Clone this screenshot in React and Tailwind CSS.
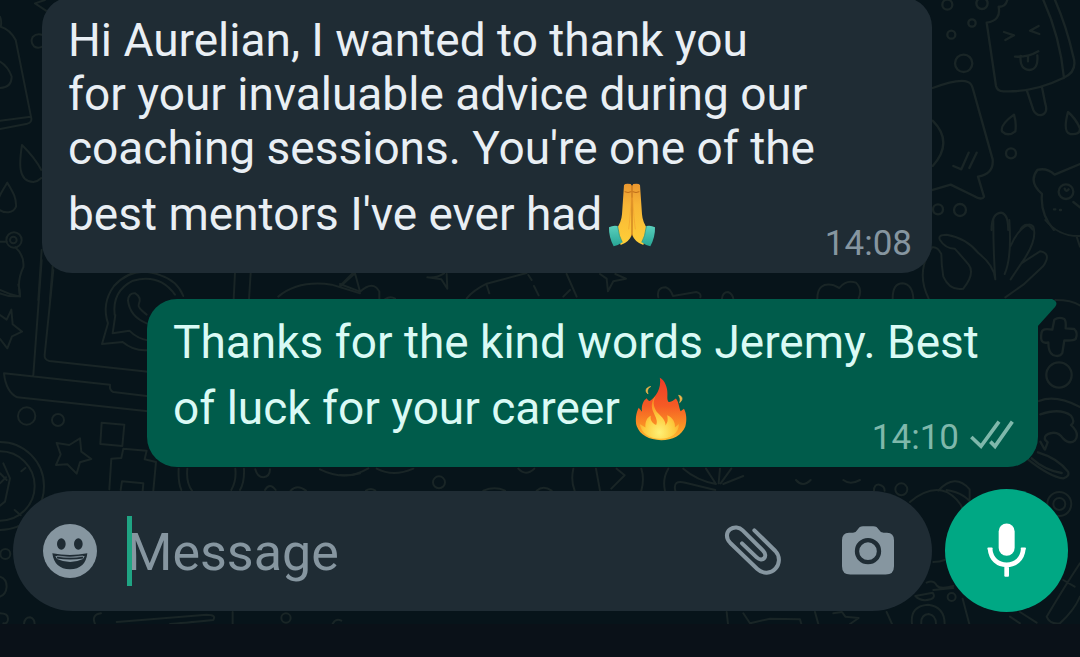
import React from "react";

function Wallpaper() {
  return (
    <svg
      aria-hidden="true"
      className="absolute inset-0 h-full w-full"
      viewBox="0 0 1080 624"
      preserveAspectRatio="xMidYMax slice"
      fill="none"
      stroke="#192526"
      strokeLinecap="round"
      strokeLinejoin="round"
    >
      {/* left edge: mug, drops, lamp */}
      <g transform="scale(.3333)" strokeWidth="6">
        <path d="M135 0 105 10 138 32M128 105q-18-6-30 6-8 16 4 28 12 8 26 0M0 50q6 15 2 30 28 8 45 40l47 235q2 12-12 16L0 387M92 350 0 362M0 185q25 15 35 45 0 32-35 34" />
        <path d="M66 435c-8 50-14 110 34 111q14-2 24-12M66 435q40 40 58 75M22 548c-20 32-36 55-26 80 18 14 44 12 52-8 2-30-14-50-26-72ZM0 725h20M46 742q28 25 24 60-20 40-10 88Q30 885 0 870M125 750 115 900M160 775l-10 125M705 820l-4 80M752 820l-5 80M835 890q60-50 160-36l85 26M1020 858l50-50" />
        <circle cx="42" cy="720" r="23" />
        <circle cx="40" cy="720" r="10" />
      </g>
      {/* laptop, stars, pixel blocks */}
      <g transform="translate(0 260) scale(.3333)" strokeWidth="6">
        <path d="M125 0 100 345M160 30 134 285q-2 14 14 18l296 32M12 340l318 34q-2 18 10 22l100 12M12 340q6 56 40 72l392 42" />
        <path d="M324 190q-20-60 18-112 60-65 140-32 50 16 68 62M324 190l-18 62 62-6q36 30 80 24M346 165l-8 55 50-8q26 26 60 30M344 165q-8-72 55-103 80-22 126 42M440 190q-50-20-56-68 2-24 22-22 20 12 10 34-4 8 24 30" />
        <path d="M0 100q30 12 60 8 0-20-5-35M0 165l20 14 14-30 4 44 28 22-30 14-14 36-22-28M240 535l4 40 30 22-34 10-10 34-28-28-34 2 14-32-12-34 38 6ZM305 488l68 6-6 64-66-6ZM370 566l70 6-6 26 34 8-8 86M370 566l-6 28-30 2-6 92M362 690l4-26 64 6-2 24" />
        <circle cx="80" cy="468" r="26" />
        <circle cx="174" cy="480" r="18" />
        <circle cx="0" cy="678" r="132" />
        <circle cx="0" cy="678" r="104" />
        <path d="m10 610 20 45-15 70-15 12M0 640l20 20M0 670l18-18M64 634l12-10M44 750l18 16" />
        <path d="M536 626q-2 40 8 64M562 626q-4 42 14 66M706 626q4 36-12 64M732 626q2 40-12 64M766 628q6 24 24 24 20-2 20-24M960 628q60 30 120 12" />
      </g>
      {/* strip below composer on the left */}
      <g transform="translate(0 480) scale(.3333)" strokeWidth="6">
        <circle cx="16" cy="222" r="15" />
        <path d="M0 290q20 6 20 30-2 24-20 30M0 400q24 0 24 16t-14 14M72 432q2-20 18-20 14 4 14 20M285 432q-12-28 18-32M350 426l270-22q30 0 20 16-100 10-130 12M698 396v36M998 432q8-18 26-10M795 30q14-24 32 0M872 32q20-20 46 0" />
        <circle cx="858" cy="414" r="14" />
      </g>
      {/* between the bubbles */}
      <g transform="translate(340 260) scale(.3333)" strokeWidth="6">
        <path d="M0 80 45 40 60 95 0 72M60 95q40-36 58 0v24M135 118q16-12 30-2M262 52q30 2 50-12M262 52l42 6 18 28-2-44M380 115q20-24 60-44l120-32M440 75l8 25M565 45l10 15M582 78l14 28M680 42l30 68M670 110l20-20M780 42l20 14 4 38 16-30 38-8-32-14M955 112q-6-30 22-30 14 4 22 26l70-12q16 4 12 16M1146 116q2-20 18-20 14 6 16 20" />
      </g>
      {/* above the composer */}
      <g transform="translate(340 460) scale(.3333)" strokeWidth="6">
        <path d="M0 45q40 6 85-20M110 26q50 26 110 0M535 26q22 24 48 0M78 92q14-10 28 0M430 92q35-14 65 0M590 92q20-18 45 0M700 26q-8 36 4 66M768 26l12 66M830 26l24 20-40 40M904 26q10 30 0 66M985 26q-18 30-10 66M1030 26q40 35 98 46M1128 72l-30-46M1136 70l4-44M1142 70l32-44M1006 92q-8-34 30-24l90 22M1150 72l60-24" />
        <circle cx="297" cy="67" r="18" />
      </g>
      {/* right edge: ice lolly, chat card, bear */}
      <g transform="translate(900 0) scale(.3333)" strokeWidth="7">
        <circle cx="142" cy="14" r="15" />
        <circle cx="246" cy="10" r="17" />
        <circle cx="216" cy="69" r="11" />
        <circle cx="154" cy="104" r="12" />
        <circle cx="191" cy="190" r="26" />
        <circle cx="333" cy="460" r="15" />
        <circle cx="114" cy="628" r="15" />
        <circle cx="180" cy="630" r="18" />
        <path d="M322 0q-6 22-26 20 8 42-36 48l28 190q4 16 22 16 90 4 180-40 44-20 30-64Q500 80 465 0M430 0q50 110 62 234M380 270l20 60q10 20 28 14 16-8 8-32l-10-50M312 96l30 10-26 14M416 78l-26 14 28 10M345 170q40 2 70-16M362 168q-4 40 26 42 28-2 24-44M384 168v16" />
        <path d="M342 344q-42 30-36 50 18 18 40 0 4-24-4-50ZM504 336q-16 60 6 66 30 4 30-16-12-30-36-50ZM98 264q80-30 106-18 10 4 14 18l60 214q4 44-44 52l18 60q-6 12-30-2l-70-34-54 16M98 362q64 64 0 136M160 498l24 10 22-50M208 504l22-46M275 690q0-50 28-52 22 4 22 52M362 688q18-26 36 0M540 492l-76 32q-24-22-52-14-28 36 14 72-6 60 36 108M540 622l-20-16M462 628h4M480 630h3" />
        <circle cx="498" cy="575" r="22" />
        <path d="M494 566q4 12 12 2" />
      </g>
      {/* right edge: heart and plant */}
      <g transform="translate(800 220) scale(.3333)" strokeWidth="6">
        <path d="M52 236q0-52 50-40l16 8q20-26 50-16 20 20 8 46M278 236q0-46 30-46 30 4 32 46M386 236q-40-80 10-154 16-4 28 20 0 30 6 68 20 44 60 36 36-46 16-72-16-20-42-48-28 0-44-26-8-16 20-16 60 10 96 56 46 36 50 78M586 178q-6-80-6-178M614 162q22-50 14-162M632 178l32-48q50-70 36-110-12-16-36 8-20 20-32 50M664 130l56-36q36 6 10 44l-60 56-54 38M736 0q40 50 104 48M830 50l10 30M766 240q50 0 74 16" />
      </g>
      {/* right edge: cross, ring, mushroom */}
      <g transform="translate(935 295) scale(.3333)" strokeWidth="7">
        <path d="M358 74q14-10 30-2 6 6 4 28l26 2q12 12 4 30-8 6-34 4l-6 38q-8 14-28 6-14-6-14-38-28 8-20-30 2-14 32-8Z" />
        <circle cx="372" cy="240" r="38" />
        <path d="M312 318q50-20 123 18M316 358q60-20 92 4 14 20 0 28 28 26 12 46-16 14-36-6-14-20-34-16-24 4-20 20l8 8-8 22M316 440l12 22M275 490q70 56 110 60 20-6 14-20-30-40-90-58M290 490q40 36 90 44" />
      </g>
      {/* around the microphone button */}
      <g transform="translate(700 480) scale(.3333)" strokeWidth="6">
        <path d="M288 0q20 24 44 0M430 0q20 16 50 0M522 32q0-20 16-18 16 4 16 18M630 66q60-50 110-30 36 20 50 54M715 32q50-54 94-4v30M740 30q60 10 80 50M700 246q20 0 34-6M680 308q20-10 30 8 10 14 50 2M646 348l52-10q10 14-6 20-30 8-46-10ZM700 330l60-6M788 356l20 76M560 396l16 36M636 432q-6-54 48-58 50 6 50 58M664 432q-2-28 22-30 22 4 22 30M345 396l10 36M130 400l20 30 60-14 90 2 4 14M400 400l26-4 10 14 40 4-26 18M80 396l4 36M1140 250q-40 60-100 160 10 24 40 20 44-40 60-80M930 410l30 20M960 396l50 32M1090 300l34 20" />
        <circle cx="604" cy="28" r="18" />
        <circle cx="755" cy="351" r="12" />
        <circle cx="1078" cy="72" r="36" />
        <circle cx="1078" cy="72" r="18" />
      </g>
    </svg>
  );
}

function PrayingHands() {
  return (
    <svg role="img" aria-label="folded hands" viewBox="144 36 144 192" className="mb-4 ml-1.5 h-16 w-12 shrink-0">
      <defs>
        <linearGradient id="skin" x1="0" y1="0" x2="0" y2="1">
          <stop offset="0" stopColor="#e9962f" />
          <stop offset=".35" stopColor="#f8b636" />
          <stop offset="1" stopColor="#ffcf38" />
        </linearGradient>
        <linearGradient id="cuff" x1="0" y1="0" x2="0" y2="1">
          <stop offset="0" stopColor="#5bd0bd" />
          <stop offset="1" stopColor="#27a595" />
        </linearGradient>
      </defs>
      <path d="M192 42q4-6 20-3l4 6v145q-8 24-34 32l-13-48q15-19 17-44Z" fill="url(#skin)" />
      <path d="M240 42q-4-6-20-3l-4 6v145q8 24 34 32l13-48q-15-19-17-44Z" fill="url(#skin)" />
      <path d="M216 44v152M194 62q10 5 20 0M218 62q10 5 20 0" stroke="#bd6b18" strokeWidth="3" fill="none" />
      <path d="M214 80q-4 65-8 95M218 80q4 65 8 95" stroke="#f1a02e" strokeWidth="2" fill="none" />
      <path d="M147 169q12-7 26-4 4 33 14 49-10 8-26 12-15-28-14-57Z" fill="url(#cuff)" />
      <path d="M285 169q-12-7-26-4-4 33-14 49 10 8 26 12 15-28 14-57Z" fill="url(#cuff)" />
      <path d="M173 166q4 32 14 48M259 166q-4 32-14 48" stroke="#1e8e80" strokeWidth="2" fill="none" />
    </svg>
  );
}

function Fire() {
  return (
    <svg role="img" aria-label="fire" viewBox="104 52 158 190" className="mb-4 ml-3.5 h-16 w-[53px] shrink-0">
      <defs>
        <linearGradient id="flame" x1="0" y1="0" x2="0" y2="1">
          <stop offset="0" stopColor="#ed3b27" />
          <stop offset=".45" stopColor="#f55b25" />
          <stop offset=".8" stopColor="#fb9724" />
          <stop offset="1" stopColor="#ffbd33" />
        </linearGradient>
        <radialGradient id="core" cx=".5" cy=".85" r=".7">
          <stop offset="0" stopColor="#fff176" />
          <stop offset=".55" stopColor="#fdca3d" />
          <stop offset="1" stopColor="#fb8c24" />
        </radialGradient>
      </defs>
      <path d="M181 54c10 4 20 20 22 38 2 16-2 26 4 34 8 2 16-6 22-10 8 8 8 24 14 38l10-8c8 14 9 36 4 53-10 26-38 41-72 41-36 0-64-16-73-42-5-18-2-40 6-55l10 12c-3-18 4-34 14-40 2 4 5 8 9 8 16-10 36-36 30-69Z" fill="url(#flame)" />
      <path d="M168 108c-10 22-4 38 8 52 12 12 22 22 22 36 8-10 7-19 5-30 18 8 24 22 23 36l12-10c0 28-24 44-55 44-34 0-57-17-62-44l17 10c-1-18 5-30 16-35-2 13 3 20 16 28 6-12-2-24-8-38-8-18-6-34 6-49Z" fill="url(#core)" />
      <path d="M154 80c-8 4-12 12-8 22-10-6-8-20 8-22ZM237 106c12 2 14 14 3 22 3-8 2-14-3-22Z" fill="#efb64b" stroke="#efb64b" strokeWidth="2" />
    </svg>
  );
}

function Ticks() {
  return (
    <svg role="img" aria-label="Delivered" viewBox="510 600 138 90" className="mb-[7px] ml-2.5 h-[30px] w-[46px]" fill="none" stroke="#7fb8ab" strokeWidth="11">
      <path d="m517 651 29 28 54-74M574 665l14 14 52-74" />
    </svg>
  );
}

function SmileIcon() {
  return (
    <svg aria-hidden="true" viewBox="129 130 162 162" className="size-[54px]">
      <circle cx="210" cy="211" r="81" fill="#8696a0" />
      <ellipse cx="184" cy="190" rx="13" ry="17" fill="#1f2c34" />
      <ellipse cx="235" cy="190" rx="13" ry="17" fill="#1f2c34" />
      <path d="M157 218q53 10 105 0-5 47-52 48-47-1-53-48Z" fill="#1f2c34" />
      <path d="M166 226q44 7 88 0l-5 9q-38 18-78 0Z" fill="#8696a0" />
      <path d="M171 226q39 7 78 0" stroke="#8696a0" strokeWidth="2" fill="none" />
      <path d="M171 231q39 6 78 0" stroke="#1f2c34" strokeWidth="5" fill="none" />
    </svg>
  );
}

function ClipIcon() {
  return (
    <svg aria-hidden="true" viewBox="72 132 171 159" className="h-[53px] w-[57px]" fill="none" stroke="#8696a0" strokeWidth="12" strokeLinecap="round">
      <path d="M163 151L226 213C243 231 237 254 227 265C213 281 189 283 172 267L91 189C77 174 78 157 90 148C102 139 118 141 128 151L189 212C206 230 187 248 170 232L126 190" />
    </svg>
  );
}

function CameraIcon() {
  return (
    <svg aria-hidden="true" viewBox="426 137 156 149" className="h-[50px] w-[52px]">
      <path d="M447 157h12q10-2 14-10 5-10 16-10h31q11 0 16 10 5 9 15 10h10q21 1 21 22v78q0 25-25 25H451q-25 0-25-25v-78q0-21 21-22Z" fill="#8696a0" />
      <circle cx="504" cy="212" r="33" fill="#8696a0" stroke="#1f2c34" strokeWidth="13" />
    </svg>
  );
}

function MicIcon() {
  return (
    <svg aria-hidden="true" viewBox="861 130 117 164" className="h-[55px] w-[39px]" fill="none" stroke="#fff">
      <rect x="896" y="131" width="48" height="97" rx="24" fill="#fff" stroke="none" />
      <path d="M870 207c3 32 24 48 50 48s47-16 50-48M920 255v32" strokeWidth="14" />
      <path d="M865 206h10M965 206h10M916 288h8" strokeWidth="6" strokeLinecap="round" />
    </svg>
  );
}

export default function App() {
  return (
    <div className="flex h-screen flex-col overflow-hidden bg-[#0a1118] font-['Roboto',sans-serif]">
      <main className="relative flex min-h-0 flex-1 flex-col justify-end overflow-hidden bg-[#07141a]">
        <Wallpaper />
        <section aria-label="Conversation" className="relative flex flex-col gap-[26px] pb-[22px]">
          <article className="ml-[42px] mr-[148px] rounded-[30px] bg-[#1f2c34] pb-2.5 pl-[26px] pr-5 pt-4 text-[46px] leading-[54px] text-[#e9eff4]">
            <p>
              Hi Aurelian, I wanted to thank you
              <br />
              for your invaluable advice during our
              <br />
              coaching sessions. You're one of the
            </p>
            <div className="flex h-[88px] items-end">
              <p className="mb-[22px] whitespace-nowrap">best mentors I've ever had</p>
              <PrayingHands />
              <time className="ml-auto text-[35px] leading-[38px] text-[#8696a0]">14:08</time>
            </div>
          </article>
          <article className="relative ml-[147px] mr-[42px] rounded-[30px] rounded-tr-none bg-[#005c4b] pb-2.5 pl-[26px] pr-[23px] pt-4 text-[46px] leading-[54px] text-[#dafaf5]">
            <svg aria-hidden="true" viewBox="0 0 20 30" className="absolute left-full top-0 -ml-px h-[30px] w-5">
              <path d="M0 0h15q7 3 3 8L0 28Z" fill="#005c4b" />
            </svg>
            <p>Thanks for the kind words Jeremy. Best</p>
            <div className="flex h-[88px] items-end">
              <p className="mb-[22px] whitespace-nowrap">of luck for your career</p>
              <Fire />
              <div className="ml-auto flex items-end">
                <time className="text-[35px] leading-[38px] text-[#7fb8ab]">14:10</time>
                <Ticks />
              </div>
            </div>
          </article>
        </section>
        <form
          onSubmit={(event) => event.preventDefault()}
          className="relative flex items-center gap-[13px] pb-3 pl-[13px] pr-3"
        >
          <div className="flex h-[120px] min-w-0 flex-1 items-center rounded-full bg-[#1f2c34] pl-[30px] pr-[38px]">
            <button type="button" aria-label="Emoji" className="shrink-0">
              <SmileIcon />
            </button>
            <div className="relative ml-[30px] flex min-w-0 flex-1 items-center">
              <input
                type="text"
                aria-label="Message"
                placeholder="Message"
                className="h-[70px] w-full bg-transparent pt-1 text-[52px] text-[#e9eff4] outline-none placeholder:text-[#8696a0]"
              />
              <span aria-hidden="true" className="absolute left-0 top-0 h-[70px] w-[5px] bg-[#1fa483]" />
            </div>
            <div className="flex shrink-0 items-center gap-[61px]">
              <button type="button" aria-label="Attach">
                <ClipIcon />
              </button>
              <button type="button" aria-label="Camera">
                <CameraIcon />
              </button>
            </div>
          </div>
          <button
            type="button"
            aria-label="Record voice message"
            className="flex size-[123px] shrink-0 items-center justify-center rounded-full bg-[#00a884]"
          >
            <MicIcon />
          </button>
        </form>
      </main>
      <footer className="h-[33px] shrink-0" />
    </div>
  );
}
